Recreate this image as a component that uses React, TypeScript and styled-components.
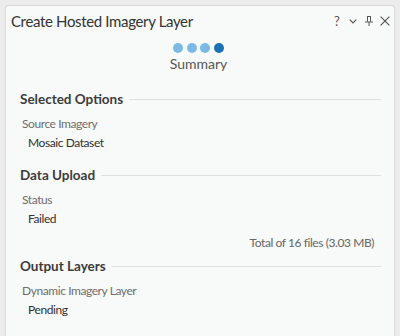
import React from "react";
import styled, { createGlobalStyle } from "styled-components";

const Global = createGlobalStyle`
  html, body { margin: 0; padding: 0; background: #ececec; }
  body { width: 400px; height: 336px; overflow: hidden; font-family: "Lato", "Open Sans", sans-serif; }
`;

const Frame = styled.div`
  padding: 5px 5px 0 5px;
  height: 336px;
  box-sizing: border-box;
  display: flex;
`;

const Panel = styled.div`
  flex: 1;
  background: #f8f9f9;
  border: 1px solid #d9d9d9;
  border-bottom: none;
  border-radius: 4px 4px 0 0;
  display: flex;
  flex-direction: column;
`;

const TitleBar = styled.div`
  display: flex;
  align-items: center;
  justify-content: space-between;
  height: 30px;
  padding: 0 1px 0 5px;
`;

const Title = styled.div`
  font-size: 15px;
  letter-spacing: -0.35px;
  color: #333;
`;

const Controls = styled.div`
  display: flex;
  align-items: center;
  color: #555;
`;

const CtrlBtn = styled.span`
  width: 16px;
  height: 16px;
  display: flex;
  align-items: center;
  justify-content: center;
  font-size: 13px;
`;

const Stepper = styled.div`
  display: flex;
  flex-direction: column;
  align-items: center;
  margin-top: 7px;
  padding-right: 3px;
`;

const Dots = styled.div`
  display: flex;
  gap: 3.7px;
`;

const Dot = styled.span<{ $active?: boolean }>`
  width: 10px;
  height: 10px;
  border-radius: 50%;
  background: ${(p) => (p.$active ? "#1b71b6" : "#7cb9e4")};
`;

const StepLabel = styled.div`
  font-size: 14px;
  line-height: 18px;
  color: #555;
  margin-top: 2px;
`;

const Content = styled.div`
  padding: 16px 13px 0 14px;
  display: flex;
  flex-direction: column;
`;

const Section = styled.section<{ $tight?: boolean }>`
  display: flex;
  flex-direction: column;
  margin-bottom: ${(p) => (p.$tight ? 4 : 13)}px;
`;

const SectionHeader = styled.div`
  display: flex;
  align-items: center;
  gap: 6px;
  font-size: 13.5px;
  font-weight: 700;
  color: #3c3c3c;
  height: 20px;
  &::after {
    content: "";
    flex: 1;
    height: 1px;
    background: #e0e0e0;
  }
`;

const Label = styled.div`
  font-size: 12px;
  letter-spacing: -0.42px;
  color: #6e6e6e;
  padding-left: 2px;
  margin-top: 6px;
  line-height: 18px;
`;

const Value = styled.div`
  font-size: 12px;
  letter-spacing: -0.42px;
  color: #303030;
  padding-left: 8px;
  line-height: 18px;
  margin-top: 1px;
`;

const Total = styled.div`
  font-size: 12px;
  letter-spacing: -0.42px;
  color: #666;
  text-align: right;
  padding-right: 7px;
  line-height: 18px;
  margin-top: 6px;
`;

const HelpGlyph = styled.span`
  font-size: 13px;
  color: #555;
`;

function Field({ label, value }: { label: string; value: string }) {
  return (
    <>
      <Label>{label}</Label>
      <Value>{value}</Value>
    </>
  );
}

export default function App() {
  return (
    <>
      <Global />
      <Frame>
        <Panel>
          <TitleBar>
            <Title>Create Hosted Imagery Layer</Title>
            <Controls>
              <CtrlBtn>
                <HelpGlyph>?</HelpGlyph>
              </CtrlBtn>
              <CtrlBtn>
                <svg width="8" height="5" viewBox="0 0 8 5">
                  <path d="M0.7 0.7 L4 4 L7.3 0.7" fill="none" stroke="#555" strokeWidth="1.2" />
                </svg>
              </CtrlBtn>
              <CtrlBtn>
                <svg width="8" height="10" viewBox="0 0 8 10">
                  <path d="M2 0.5 H6 M2.5 0.5 V5.5 M5.5 0.5 V5.5 M0 6 H8 M4 6 V10" fill="none" stroke="#555" strokeWidth="1" />
                </svg>
              </CtrlBtn>
              <CtrlBtn>
                <svg width="10" height="10" viewBox="0 0 10 10">
                  <path d="M0.6 0.6 L9.4 9.4 M9.4 0.6 L0.6 9.4" fill="none" stroke="#555" strokeWidth="1.2" />
                </svg>
              </CtrlBtn>
            </Controls>
          </TitleBar>
          <Stepper>
            <Dots>
              <Dot />
              <Dot />
              <Dot />
              <Dot $active />
            </Dots>
            <StepLabel>Summary</StepLabel>
          </Stepper>
          <Content>
            <Section>
              <SectionHeader>Selected Options</SectionHeader>
              <Field label="Source Imagery" value="Mosaic Dataset" />
            </Section>
            <Section $tight>
              <SectionHeader>Data Upload</SectionHeader>
              <Field label="Status" value="Failed" />
              <Total>Total of 16 files (3.03 MB)</Total>
            </Section>
            <Section>
              <SectionHeader>Output Layers</SectionHeader>
              <Field label="Dynamic Imagery Layer" value="Pending" />
            </Section>
          </Content>
        </Panel>
      </Frame>
    </>
  );
}
